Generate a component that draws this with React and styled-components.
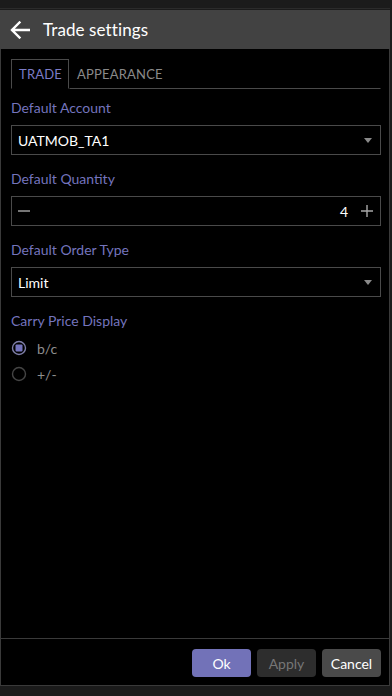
import React from "react";
import styled, { createGlobalStyle } from "styled-components";

const GlobalStyle = createGlobalStyle`
  html, body, #root {
    margin: 0;
    padding: 0;
    height: 100%;
  }
  body {
    background: #1b1b1b;
    font-family: "Lato", "Noto Sans", sans-serif;
    -webkit-font-smoothing: antialiased;
  }
`;

const Screen = styled.div`
  display: flex;
  flex-direction: column;
  height: 696px;
  width: 392px;
  background: #1b1b1b;
`;

const StatusStrip = styled.div`
  height: 8px;
  border-bottom: 1px solid #2b2b2b;
  margin-right: 2px;
  margin-bottom: 1px;
`;

const Dialog = styled.div`
  display: flex;
  flex-direction: column;
  flex: 1;
  margin-right: 2px;
  margin-bottom: 10px;
  background: #000;
`;

const Header = styled.div`
  display: flex;
  align-items: center;
  height: 39px;
  padding-left: 9px;
  background: #424242;
  color: #fff;
`;

const BackButton = styled.button`
  display: flex;
  align-items: center;
  justify-content: center;
  width: 21px;
  height: 21px;
  margin-right: 13px;
  padding: 0;
  border: 0;
  background: none;
  color: #fff;
`;

const Title = styled.h1`
  margin: 0;
  font-size: 17px;
  font-weight: 400;
  letter-spacing: 0.1px;
`;

const Body = styled.div`
  display: flex;
  flex-direction: column;
  flex: 1;
  border-left: 1px solid #3a3a3a;
  border-right: 1px solid #3a3a3a;
  padding: 10px 8px 0 10px;
`;

const Tabs = styled.div`
  display: flex;
  height: 30px;
`;

const Tab = styled.div`
  display: flex;
  align-items: center;
  padding: 0 6px 0 7px;
  font-size: 13px;
  letter-spacing: 0.2px;
  color: ${p => (p.active ? "#7b7bc6" : "#8a8a8a")};
  border: 1px solid ${p => (p.active ? "#4a4a4a" : "transparent")};
  border-bottom: 1px solid ${p => (p.active ? "transparent" : "#4a4a4a")};
  ${p => p.fill && "flex: 1;"}
`;

const Label = styled.div`
  margin-top: ${p => (p.first ? "9px" : "14px")};
  height: 20px;
  line-height: 20px;
  font-size: 14px;
  color: #7474bd;
`;

const Field = styled.div`
  display: flex;
  align-items: center;
  height: 28px;
  margin-top: 7px;
  padding: 0 7px 0 6px;
  border: 1px solid #4a4a4a;
  color: #fff;
  font-size: 14px;
`;

const FieldText = styled.span`
  flex: 1;
  text-align: ${p => (p.right ? "right" : "left")};
  padding-right: ${p => (p.right ? "13px" : "0")};
`;

const Caret = styled.span`
  width: 0;
  height: 0;
  margin-right: 1px;
  border-left: 4px solid transparent;
  border-right: 4px solid transparent;
  border-top: 5px solid #8a8a8a;
`;

const RadioGroup = styled.div`
  display: flex;
  flex-direction: column;
  margin-top: 4px;
`;

const RadioRow = styled.label`
  display: flex;
  align-items: center;
  height: 26px;
  gap: 10px;
  font-size: 14px;
  color: #8e8e8e;
`;

const Footer = styled.div`
  display: flex;
  justify-content: flex-end;
  gap: 6px;
  height: 48px;
  padding: 10px 8px 0 0;
  box-sizing: border-box;
  border: 1px solid #3a3a3a;
`;

const Button = styled.button`
  width: 59px;
  height: 28px;
  padding: 0;
  border: 0;
  border-radius: 4px;
  font-family: inherit;
  font-size: 14px;
  background: ${p => p.bg};
  color: ${p => p.color};
`;

const Minus = () => (
  <svg width="12" height="12" viewBox="0 0 12 12">
    <path d="M0 6h12" stroke="#a8a8a8" strokeWidth="1.4" />
  </svg>
);

const Plus = () => (
  <svg width="12" height="12" viewBox="0 0 12 12">
    <path d="M0 6h12M6 0v12" stroke="#a8a8a8" strokeWidth="1.4" />
  </svg>
);

const Radio = ({ checked }) => (
  <svg width="16" height="16" viewBox="0 0 16 16">
    <circle
      cx="8"
      cy="8"
      r="6.5"
      fill="none"
      stroke={checked ? "#7e7ea8" : "#454545"}
      strokeWidth="1.4"
    />
    {checked && <rect x="4.5" y="4.5" width="7" height="7" rx="1" fill="#7474bd" />}
  </svg>
);

const Arrow = () => (
  <svg width="20" height="18" viewBox="0 0 20 18">
    <path
      d="M19 9H2.5M9.5 1.5L2 9l7.5 7.5"
      fill="none"
      stroke="#fff"
      strokeWidth="2.4"
      strokeLinecap="square"
    />
  </svg>
);

export default function App() {
  return (
    <Screen>
      <GlobalStyle />
      <StatusStrip />
      <Dialog>
        <Header>
          <BackButton>
            <Arrow />
          </BackButton>
          <Title>Trade settings</Title>
        </Header>
        <Body>
          <Tabs>
            <Tab active>TRADE</Tab>
            <Tab fill>APPEARANCE</Tab>
          </Tabs>

          <Label first>Default Account</Label>
          <Field>
            <FieldText>UATMOB_TA1</FieldText>
            <Caret />
          </Field>

          <Label>Default Quantity</Label>
          <Field>
            <Minus />
            <FieldText right>4</FieldText>
            <Plus />
          </Field>

          <Label>Default Order Type</Label>
          <Field>
            <FieldText>Limit</FieldText>
            <Caret />
          </Field>

          <Label>Carry Price Display</Label>
          <RadioGroup>
            <RadioRow>
              <Radio checked />
              b/c
            </RadioRow>
            <RadioRow>
              <Radio />
              +/-
            </RadioRow>
          </RadioGroup>
        </Body>
        <Footer>
          <Button bg="#7272b8" color="#fff">Ok</Button>
          <Button bg="#2d2d2d" color="#767676">Apply</Button>
          <Button bg="#4a4a4a" color="#fff">Cancel</Button>
        </Footer>
      </Dialog>
    </Screen>
  );
}
